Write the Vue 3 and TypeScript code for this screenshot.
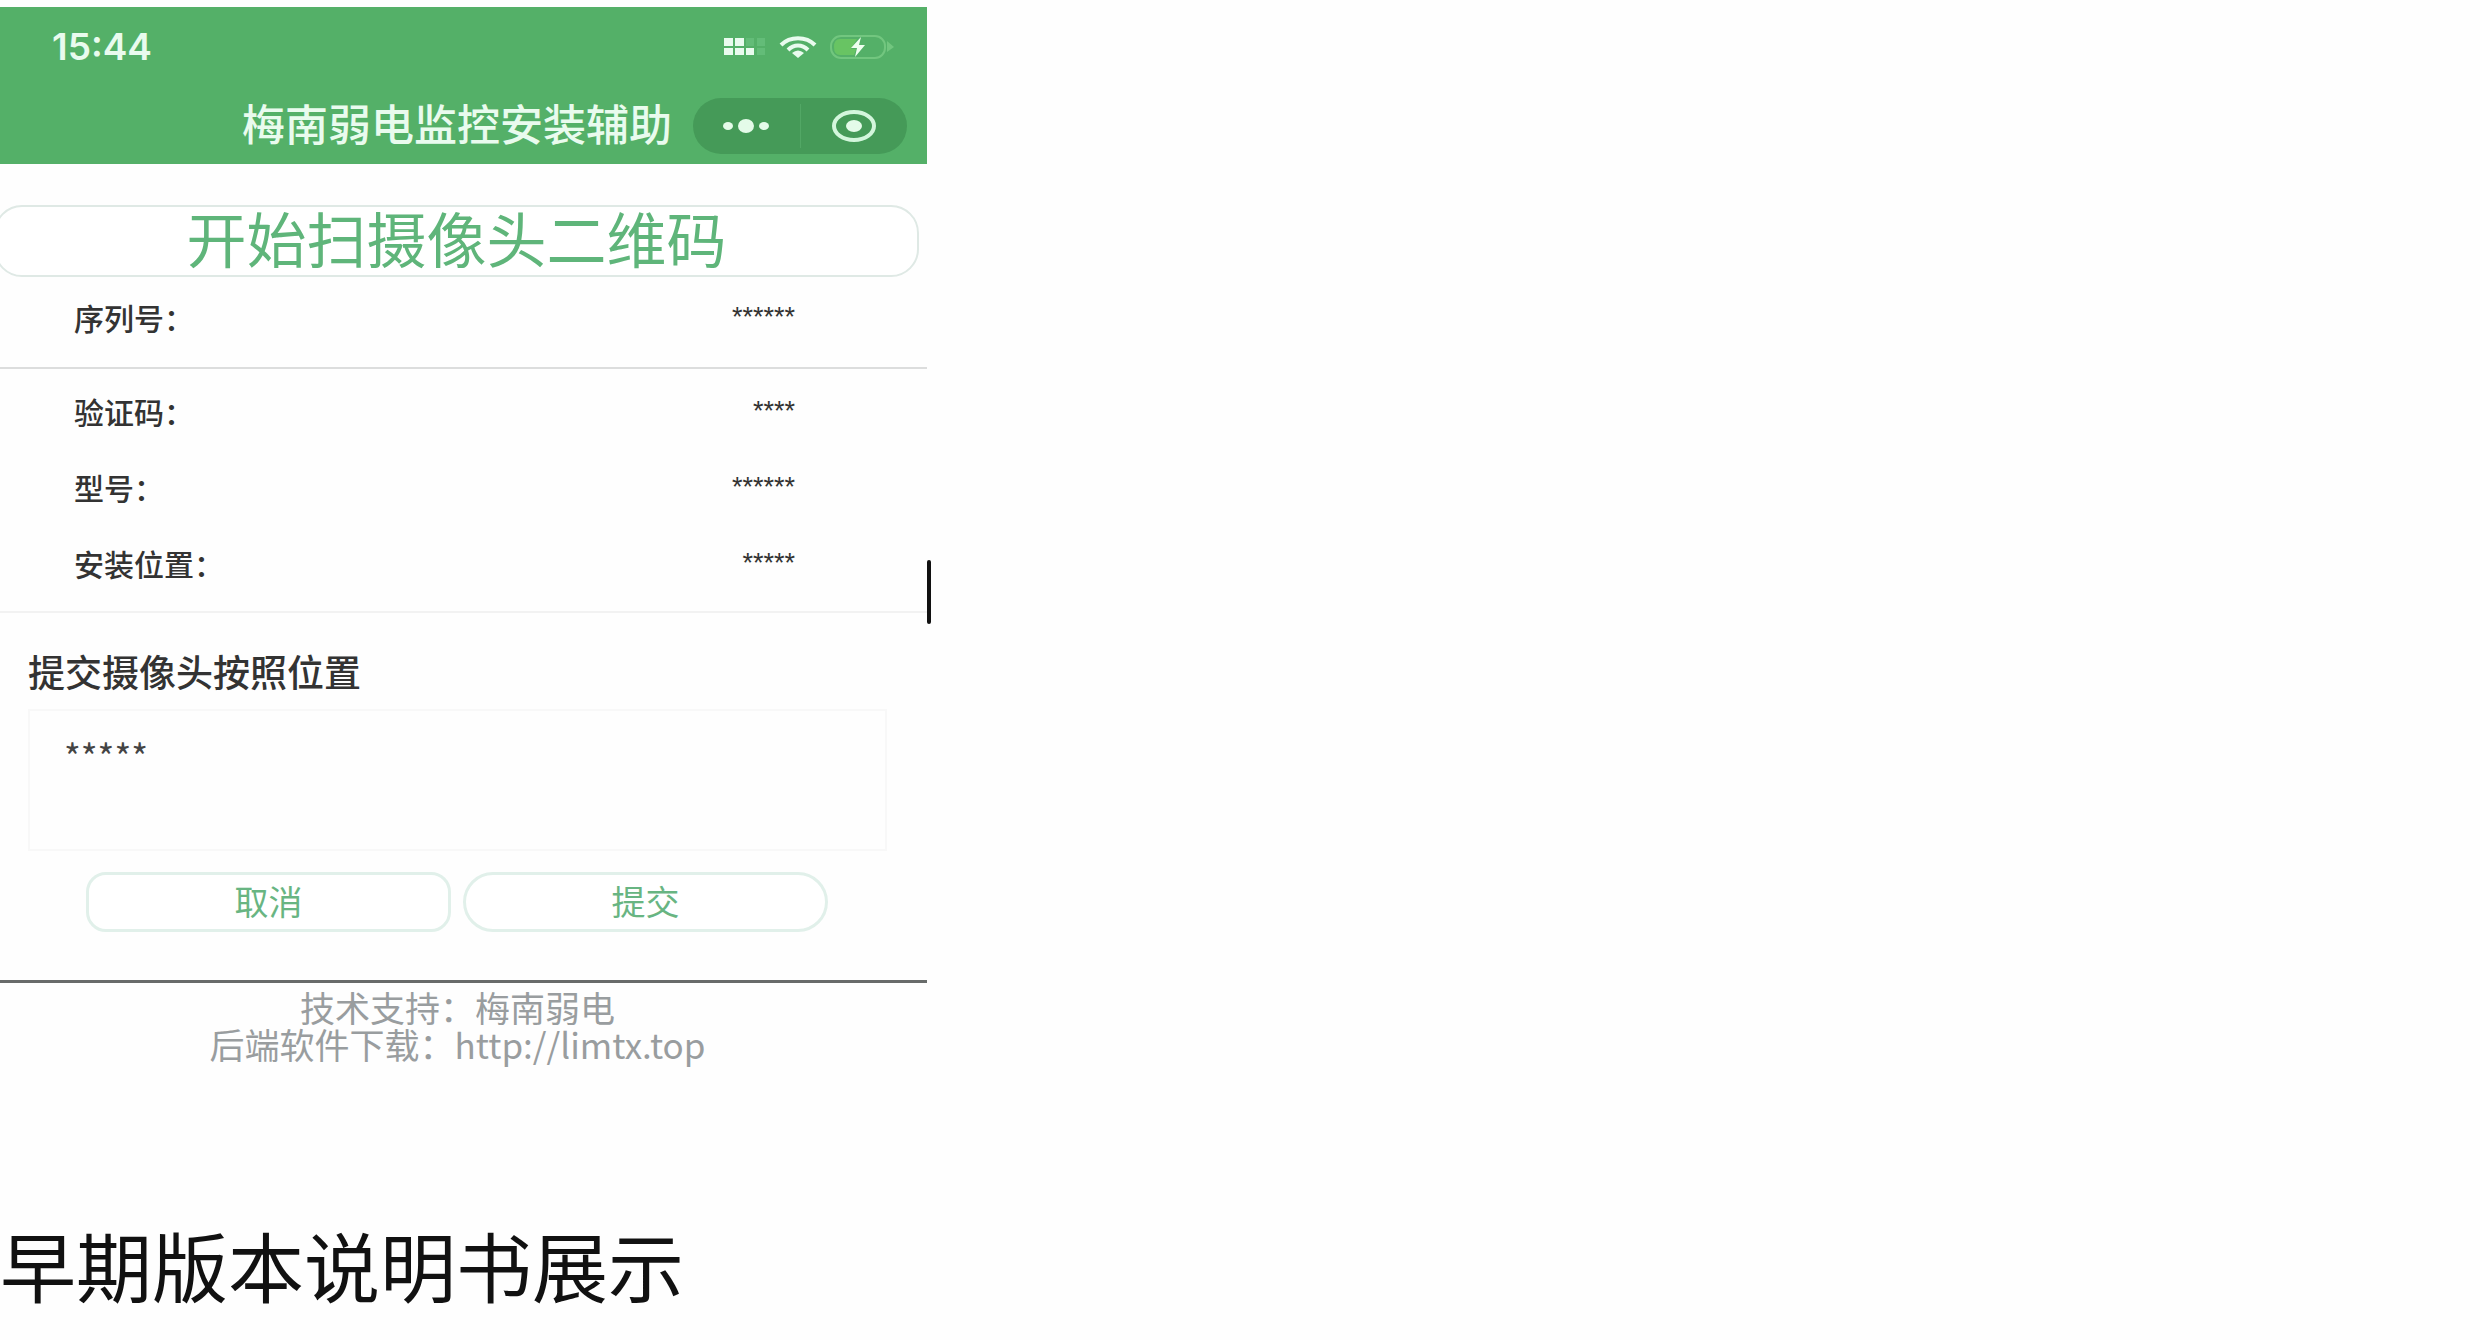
<script setup lang="ts">
import { ref } from 'vue'

interface Field {
  label: string
  value: string
}

const serial: Field = { label: '序列号：', value: '******' }
const details: Field[] = [
  { label: '验证码：', value: '****' },
  { label: '型号：', value: '******' },
  { label: '安装位置：', value: '*****' },
]
const position = ref('*****')
</script>

<template>
  <main class="page">
    <section class="phone">
      <header class="top">
        <div class="status">
          <span class="time">15:44</span>
          <span class="indicators">
            <svg width="44" height="20" viewBox="0 0 44 20" aria-hidden="true">
              <g fill="#e9fbee">
                <rect x="1" y="1" width="9" height="8" />
                <rect x="12" y="1" width="9" height="8" />
                <rect x="1" y="11" width="9" height="7" />
                <rect x="12" y="11" width="9" height="7" />
                <rect x="23" y="11" width="8" height="7" />
              </g>
              <g fill="#63bc78">
                <rect x="23" y="1" width="8" height="8" />
                <rect x="34" y="1" width="8" height="8" />
                <rect x="34" y="11" width="8" height="7" />
              </g>
            </svg>
            <svg width="38" height="22" viewBox="0 0 38 22" aria-hidden="true">
              <g fill="none" stroke="#e9fbee" stroke-width="4">
                <path d="M2 9C11 0 27 0 36 9" />
                <path d="M9 14C15 8 23 8 29 14" />
              </g>
              <path d="M13 17Q19 12 25 17L19 22Z" fill="#e9fbee" />
            </svg>
            <svg width="66" height="26" viewBox="0 0 66 26" aria-hidden="true">
              <rect x="2" y="2" width="54" height="22" rx="10" fill="none" stroke="#72c67f" stroke-width="2" />
              <path d="M11 5H28L22 15H27L25 21H11Q5 21 5 13Q5 5 11 5Z" fill="#68c463" />
              <path d="M58 7L65 13L58 18Z" fill="#72c67f" />
              <path d="M32 3L22 14H28L26 23L36 11H30Z" fill="#effff0" />
            </svg>
          </span>
        </div>
        <div class="nav">
          <h1>梅南弱电监控安装辅助</h1>
          <div class="capsule">
            <button type="button" aria-label="更多">
              <svg width="50" height="16" viewBox="0 0 50 16" aria-hidden="true">
                <g fill="#e4fbe9">
                  <ellipse cx="7" cy="8" rx="5" ry="4" />
                  <ellipse cx="25" cy="8" rx="8" ry="7" />
                  <ellipse cx="43" cy="8" rx="5" ry="4" />
                </g>
              </svg>
            </button>
            <button type="button" aria-label="关闭">
              <svg width="46" height="34" viewBox="0 0 46 34" aria-hidden="true">
                <ellipse cx="23" cy="17" rx="20" ry="14" fill="none" stroke="#d3f6dc" stroke-width="4" />
                <ellipse cx="23" cy="17" rx="8" ry="6" fill="#e4fbe9" />
              </svg>
            </button>
          </div>
        </div>
      </header>

      <button class="scan" type="button">开始扫摄像头二维码</button>

      <dl class="serial">
        <div class="row">
          <dt>{{ serial.label }}</dt>
          <dd>{{ serial.value }}</dd>
        </div>
      </dl>
      <div class="details">
        <dl>
          <div v-for="item in details" :key="item.label" class="row">
            <dt>{{ item.label }}</dt>
            <dd>{{ item.value }}</dd>
          </div>
        </dl>
        <span class="caret"></span>
      </div>

      <form class="form" @submit.prevent>
        <label for="position">提交摄像头按照位置</label>
        <textarea id="position" v-model="position"></textarea>
        <div class="actions">
          <button type="button">取消</button>
          <button class="submit" type="submit">提交</button>
        </div>
      </form>

      <footer class="support">
        <p>技术支持：梅南弱电</p>
        <p>后端软件下载：<a href="http://limtx.top">http://limtx.top</a></p>
      </footer>
    </section>
    <h2 class="caption">早期版本说明书展示</h2>
  </main>
</template>

<style>
body {
  margin: 0;
  background: #fefefe;
}
</style>

<style scoped>
.page {
  padding-top: 7px;
  font-family: "Noto Sans CJK SC", sans-serif;
  color: #333;
}
.page * {
  box-sizing: border-box;
}
h1, h2, p, dl, dd {
  margin: 0;
}
button {
  font-family: inherit;
  padding: 0;
  cursor: pointer;
}
.phone {
  max-width: 927px;
}
.top {
  background: #54b068;
  padding: 20px 20px 10px 52px;
  color: #e9fbee;
}
.status {
  display: flex;
  align-items: center;
  justify-content: space-between;
  height: 40px;
  padding-right: 12px;
}
.time {
  font-family: Inter, sans-serif;
  font-size: 37px;
  font-weight: 600;
  line-height: 40px;
}
.indicators {
  display: flex;
  align-items: center;
  gap: 12px;
}
.nav {
  display: flex;
  align-items: flex-start;
  justify-content: flex-end;
  gap: 21px;
  margin-top: 31px;
}
h1 {
  font-size: 43px;
  font-weight: 500;
  line-height: 48px;
}
.capsule {
  display: flex;
  width: 214px;
  height: 56px;
  border-radius: 28px;
  background: #459a58;
}
.capsule button {
  display: flex;
  flex: 1;
  align-items: center;
  justify-content: center;
  margin: 6px 0;
  border: 0;
  background: none;
}
.capsule button + button {
  border-left: 1px solid #52a765;
}
.scan {
  display: block;
  width: calc(100% - 2px);
  height: 72px;
  margin: 41px 0 0 -6px;
  border: 2px solid #dfe9e5;
  border-radius: 28px;
  background: #fff;
  color: #5fb57a;
  font-size: 60px;
  line-height: 60px;
  padding-bottom: 8px;
}
.serial {
  padding: 2px 0 12px;
  border-bottom: 2px solid #dcdddd;
}
.details {
  position: relative;
  padding: 4px 0 10px;
  border-bottom: 2px solid #f2f2f2;
}
.row {
  display: flex;
  align-items: flex-start;
  justify-content: space-between;
  height: 76px;
  padding: 0 132px 0 74px;
  line-height: 76px;
}
dt {
  font-size: 30px;
  font-weight: 500;
}
dd {
  font-family: "Liberation Sans", sans-serif;
  font-size: 27px;
}
.caret {
  position: absolute;
  right: -4px;
  bottom: -13px;
  width: 4px;
  height: 64px;
  border-radius: 2px;
  background: #111;
}
.form {
  padding: 34px 40px 48px 28px;
}
.form label {
  display: block;
  font-size: 37px;
  font-weight: 500;
  line-height: 48px;
}
textarea {
  display: block;
  width: 100%;
  height: 142px;
  margin-top: 14px;
  padding: 18px 34px;
  border: 2px solid #f8f8f8;
  background: #fefefe;
  color: #444;
  font-family: inherit;
  font-size: 36px;
  line-height: 52px;
  resize: none;
}
.actions {
  display: flex;
  gap: 12px;
  margin: 21px 59px 0 58px;
}
.actions button {
  flex: 1;
  height: 60px;
  padding-bottom: 2px;
  border: 3px solid #e1f0ea;
  border-radius: 20px;
  background: #fff;
  color: #68b582;
  font-size: 34px;
  line-height: 52px;
}
.actions .submit {
  border-radius: 30px;
}
.support {
  padding-top: 5px;
  border-top: 3px solid #686b6a;
  color: #999d9f;
  font-size: 35px;
  line-height: 37px;
  text-align: center;
}
.support p {
  padding-right: 12px;
}
.support a {
  color: inherit;
  text-decoration: none;
}
.caption {
  margin-top: 150px;
  color: #111;
  font-size: 76px;
  font-weight: 400;
  line-height: 104px;
}
</style>
